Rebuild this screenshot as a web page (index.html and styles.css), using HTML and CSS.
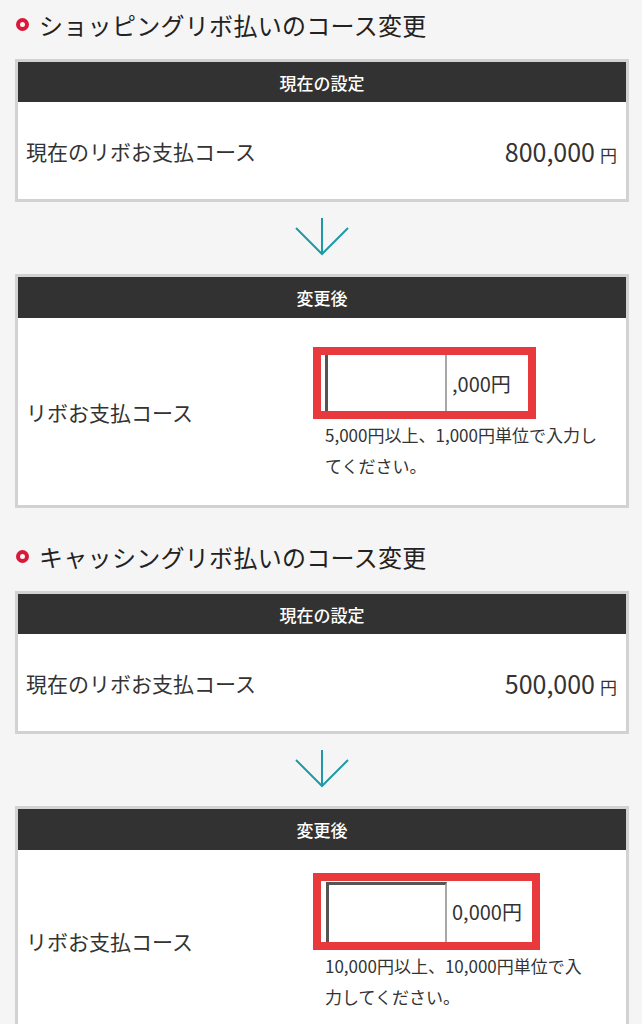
FILE: index.html
```html
<!DOCTYPE html>
<html lang="ja">
<head>
<meta charset="utf-8">
<title>リボお支払コース変更</title>
<link rel="stylesheet" href="styles.css">
</head>
<body>
<main class="page">
  <section class="section">
    <h2 class="section-title"><span class="ring"></span>ショッピングリボ払いのコース変更</h2>
    <div class="card">
      <div class="card-head">現在の設定</div>
      <div class="card-body card-body--current">
        <span class="label">現在のリボお支払コース</span>
        <span class="amount">800,000<span class="yen">円</span></span>
      </div>
    </div>
    <div class="arrow">
      <svg width="54" height="38" viewBox="0 0 54 38" aria-hidden="true">
        <path d="M27 0 V36 M1 10 L27 36 L53 10" fill="none" stroke="#1e9aa6" stroke-width="2"/>
      </svg>
    </div>
    <div class="card">
      <div class="card-head card-head--tall">変更後</div>
      <div class="card-body card-body--edit">
        <span class="label label--edit">リボお支払コース</span>
        <div class="entry entry--a">
          <div class="field field--a">
            <input class="input input--a" type="text" aria-label="リボお支払コース">
            <span class="suffix">,000円</span>
          </div>
          <p class="note">5,000円以上、1,000円単位で入力し<br>てください。</p>
        </div>
      </div>
    </div>
  </section>

  <section class="section section--next">
    <h2 class="section-title"><span class="ring"></span>キャッシングリボ払いのコース変更</h2>
    <div class="card">
      <div class="card-head">現在の設定</div>
      <div class="card-body card-body--current">
        <span class="label">現在のリボお支払コース</span>
        <span class="amount">500,000<span class="yen">円</span></span>
      </div>
    </div>
    <div class="arrow">
      <svg width="54" height="38" viewBox="0 0 54 38" aria-hidden="true">
        <path d="M27 0 V36 M1 10 L27 36 L53 10" fill="none" stroke="#1e9aa6" stroke-width="2"/>
      </svg>
    </div>
    <div class="card">
      <div class="card-head card-head--tall">変更後</div>
      <div class="card-body card-body--edit">
        <span class="label label--edit">リボお支払コース</span>
        <div class="entry entry--b">
          <div class="field field--b">
            <input class="input input--b" type="text" aria-label="リボお支払コース">
            <span class="suffix">0,000円</span>
          </div>
          <p class="note">10,000円以上、10,000円単位で入<br>力してください。</p>
        </div>
      </div>
    </div>
  </section>
</main>
</body>
</html>
```

FILE: styles.css
```css
* { box-sizing: border-box; }

body {
  margin: 0;
  background: #f5f5f5;
  color: #333;
  font-family: "Noto Sans CJK JP", "Noto Sans", sans-serif;
}

.page {
  padding: 8px 13px 0 15px;
}

.section--next {
  margin-top: 32px;
}

.section-title {
  margin: 0 0 17px;
  display: flex;
  align-items: center;
  font-size: 24px;
  line-height: 34px;
  font-weight: normal;
  letter-spacing: 0.3px;
  color: #222;
}

.ring {
  width: 13px;
  height: 13px;
  margin: 0 10px 1px 1px;
  border: 4px solid #d7193a;
  border-radius: 50%;
  flex: none;
}

.card {
  border: 3px solid #d2d2d2;
  background: #fff;
}

.card-head {
  height: 40px;
  background: #323232;
  color: #fff;
  font-size: 17px;
  font-weight: 500;
  display: flex;
  align-items: center;
  justify-content: center;
}

.card-head--tall {
  height: 41px;
}

.card-body {
  display: flex;
  align-items: center;
  padding: 0 9px 0 8px;
}

.card-body--current {
  height: 97px;
  justify-content: space-between;
}

.label {
  font-size: 21px;
  color: #333;
}

.label--edit {
  flex: 0 0 287px;
}

.amount {
  font-size: 25px;
  color: #333;
}

.yen {
  font-size: 17px;
  margin-left: 5px;
}

.arrow {
  height: 72px;
  display: flex;
  justify-content: center;
  align-items: center;
  padding-bottom: 3px;
}

.entry--a {
  padding: 29px 0 24px;
}

.entry--b {
  padding: 23px 0 20px;
}

.field {
  border: 8px solid #e8393d;
  display: flex;
  align-items: center;
  background: #fff;
}

.field--a {
  width: 223px;
  height: 72px;
}

.field--b {
  width: 227px;
  height: 77px;
  align-items: flex-start;
}

.input {
  width: 122px;
  margin: 0 0 0 4px;
  padding: 0;
  background: #fff;
  border: 0;
  border-left: 3px solid #555;
  border-right: 2px solid #a8a8a8;
  font: inherit;
  outline: none;
}

.input--a {
  height: 56px;
}

.input--b {
  width: 121px;
  height: 60px;
  margin: 1px 0 0 5px;
  border-top: 3px solid #555;
}

.suffix {
  padding-left: 5px;
  font-size: 20px;
  color: #333;
}

.field--b .suffix {
  align-self: center;
}

.note {
  margin: 0;
  padding-left: 12px;
  font-size: 17px;
  line-height: 31px;
  color: #333;
}
```
